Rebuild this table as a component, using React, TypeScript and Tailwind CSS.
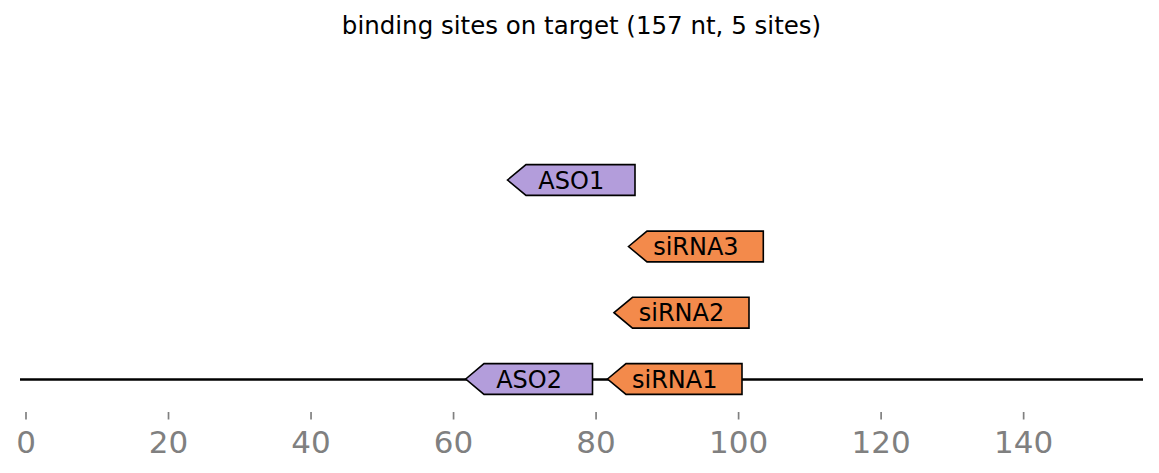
import React from "react";

type Site = {
  label: string;
  tip: number;
  base: number;
  right: number;
  cy: number;
  kind: "aso" | "sirna";
};

// feature arrows, in page pixels (the svg viewBox starts at page y=50)
const SITES: Site[] = [
  { label: "ASO1", tip: 507.5, base: 526, right: 635, cy: 180, kind: "aso" },
  { label: "siRNA3", tip: 628.5, base: 647, right: 763.3, cy: 246.5, kind: "sirna" },
  { label: "siRNA2", tip: 614, base: 632.5, right: 749, cy: 312.7, kind: "sirna" },
  { label: "ASO2", tip: 465.7, base: 484, right: 592.5, cy: 379, kind: "aso" },
  { label: "siRNA1", tip: 607.5, base: 626, right: 742, cy: 379, kind: "sirna" },
];

const TICKS = [0, 20, 40, 60, 80, 100, 120, 140];
const x0 = 26;
const pxPerNt = 7.126;
const half = 15.4;

export default function App() {
  return (
    <div className="flex h-[473px] w-[1159px] flex-col bg-white font-['DejaVu_Sans','Liberation_Sans',sans-serif] text-black">
      {/* title */}
      <div className="h-[50px] pl-[4px] pt-[14px] text-center text-[24.5px] leading-[24.5px]">
        binding sites on target (157 nt, 5 sites)
      </div>

      {/* plot */}
      <svg width={1159} height={423} viewBox="0 50 1159 423" className="block">
        <line x1={20} x2={1143} y1={379.5} y2={379.5} stroke="#000" strokeWidth={2.6} />

        {SITES.map((s) => {
          const top = s.cy - half;
          const bottom = s.cy + half;
          return (
            <g key={s.label}>
              <polygon
                points={`${s.tip},${s.cy} ${s.base},${top} ${s.right},${top} ${s.right},${bottom} ${s.base},${bottom}`}
                fill={s.kind === "aso" ? "#b39ddb" : "#f38a4b"}
                stroke="#000"
                strokeWidth={1.6}
              />
              <text x={(s.tip + s.right) / 2} y={s.cy + 8.5} textAnchor="middle" fontSize={24} fill="#000">
                {s.label}
              </text>
            </g>
          );
        })}

        {TICKS.map((t) => {
          const x = x0 + t * pxPerNt;
          return (
            <g key={t}>
              <line x1={x} x2={x} y1={412} y2={419.5} stroke="#808080" strokeWidth={1.7} />
              <text x={x} y={452.7} textAnchor="middle" fontSize={31} fill="#808080">
                {t}
              </text>
            </g>
          );
        })}
      </svg>
    </div>
  );
}
